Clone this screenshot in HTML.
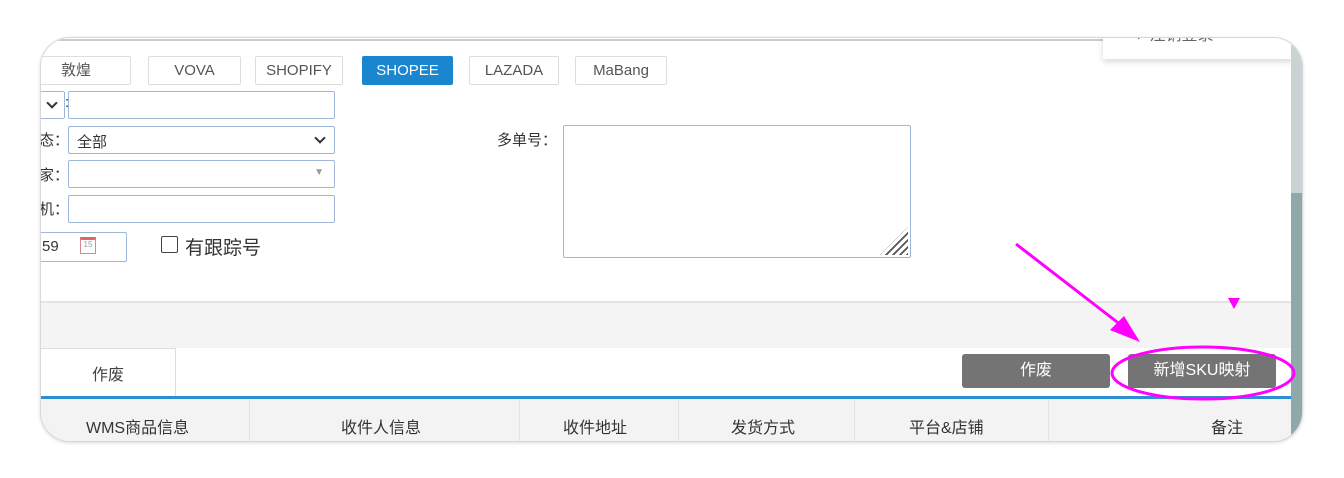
<!DOCTYPE html>
<html><head><meta charset="utf-8"><style>
*{margin:0;padding:0;box-sizing:border-box}
body{width:1344px;height:478px;background:#fff;position:relative;overflow:hidden;font-family:"Liberation Sans","Noto Sans CJK SC",sans-serif;color:#333}
.card{position:absolute;left:40px;top:37px;width:1263px;height:405px;border-radius:30px;border:1px solid #d8d8d8;overflow:hidden;background:#fff;box-shadow:0 1px 3px rgba(0,0,0,.15)}
.a{position:absolute}
.btn{position:absolute;top:18px;height:29px;border:1px solid #ddd;border-radius:2px;background:#fff;font-size:15px;color:#555;text-align:center;line-height:27px}
.inp{position:absolute;border:1px solid #9fb8d8;border-radius:2px;background:#fff;height:28px}
.lbl{position:absolute;font-size:15px;color:#333}
.th{position:absolute;top:376px;font-size:16px;color:#333}
.sep{position:absolute;top:362px;width:1px;height:42px;background:#e2e2e2}
.chev{position:absolute;width:8px;height:8px;border-right:2px solid #333;border-bottom:2px solid #333;transform:rotate(45deg)}
</style></head><body>
<div class="card">
 <div class="a" style="left:0;top:1px;width:1263px;height:2px;background:#ccc"></div>
 <div class="a" style="left:1062px;top:-10px;width:190px;height:31px;background:#fff;box-shadow:0 3px 6px rgba(0,0,0,.15);font-size:16px;color:#666;padding-left:26px;line-height:16px">⇨ 注销登录</div>
 <div class="btn" style="left:-20px;width:110px">敦煌</div>
 <div class="btn" style="left:107px;width:93px">VOVA</div>
 <div class="btn" style="left:214px;width:88px">SHOPIFY</div>
 <div class="btn" style="left:321px;width:91px;background:#1a86cf;border-color:#1a86cf;color:#fff">SHOPEE</div>
 <div class="btn" style="left:428px;width:90px">LAZADA</div>
 <div class="btn" style="left:534px;width:92px">MaBang</div>

 <div class="inp" style="left:-20px;top:53px;width:44px"><span class="chev" style="left:26px;top:7px"></span></div>
 <div class="lbl" style="left:24px;top:56px">:</div>
 <div class="inp" style="left:27px;top:53px;width:267px"></div>
 <div class="lbl" style="left:-2px;top:91px">态：</div>
 <div class="inp" style="left:27px;top:88px;width:267px"><span style="position:absolute;left:8px;top:4px;font-size:15px">全部</span><span class="chev" style="right:10px;top:7px"></span></div>
 <div class="lbl" style="left:-2px;top:126px">家：</div>
 <div class="inp" style="left:27px;top:122px;width:267px"><span style="position:absolute;right:10px;top:6px;font-size:10px;color:#999">▼</span></div>
 <div class="lbl" style="left:-2px;top:160px">机：</div>
 <div class="inp" style="left:27px;top:157px;width:267px"></div>
 <div class="inp" style="left:-20px;top:194px;width:106px;height:30px"><span style="position:absolute;left:20px;top:5px;font-size:15px">59</span><span style="position:absolute;left:58px;top:4px;width:16px;height:17px;border:1px solid #d88;border-top:3px solid #d66;font-size:8px;color:#999;text-align:center">15</span></div>
 <div class="a" style="left:120px;top:198px;width:17px;height:17px;border:1.5px solid #444;border-radius:2px"></div>
 <div class="lbl" style="left:144px;top:195px;font-size:19px">有跟踪号</div>
 <div class="lbl" style="left:456px;top:91px;font-size:15px">多单号：</div>
 <div class="inp" style="left:522px;top:87px;width:348px;height:133px"><span style="position:absolute;right:2px;bottom:2px;width:28px;height:28px;background:repeating-linear-gradient(135deg,transparent 0 3px,#555 3px 5px);clip-path:polygon(100% 0,100% 100%,0 100%)"></span></div>

 <div class="a" style="left:0;top:263px;width:1263px;height:47px;background:#f4f4f4;border-top:2px solid #e4e4e4"></div>
 <div class="a" style="left:0;top:310px;width:135px;height:50px;border-right:1px solid #ddd;border-top:1px solid #ddd;text-align:center;font-size:16px;line-height:54px;color:#444">作废</div>
 <div class="a" style="left:921px;top:316px;width:148px;height:34px;background:#747474;border-radius:3px;color:#fff;font-size:16px;text-align:center;line-height:34px">作废</div>
 <div class="a" style="left:1087px;top:316px;width:148px;height:34px;background:#747474;border-radius:3px;color:#fff;font-size:16px;text-align:center;line-height:34px">新增SKU映射</div>
 <div class="a" style="left:0;top:358px;width:1250px;height:3px;background:#2d8fd2"></div>
 <div class="a" style="left:0;top:361px;width:1250px;height:44px;background:#f3f3f3"></div>
 <div class="sep" style="left:208px"></div><div class="sep" style="left:478px"></div><div class="sep" style="left:637px"></div><div class="sep" style="left:813px"></div><div class="sep" style="left:1007px"></div>
 <div class="th" style="left:45px">WMS商品信息</div>
 <div class="th" style="left:300px">收件人信息</div>
 <div class="th" style="left:522px">收件地址</div>
 <div class="th" style="left:690px">发货方式</div>
 <div class="th" style="left:868px">平台&amp;店铺</div>
 <div class="th" style="left:1170px">备注</div>
 <div class="a" style="left:1250px;top:0;width:13px;height:405px;background:#c9d3d3"></div>
 <div class="a" style="left:1250px;top:155px;width:13px;height:250px;background:#8fa9aa"></div>
</div>
<svg class="a" style="left:0;top:0" width="1344" height="478">
 <line x1="1016" y1="244" x2="1130" y2="332" stroke="#f0f" stroke-width="3"/>
 <polygon points="1140,342 1110,330 1124,316" fill="#f0f"/>
 <polygon points="1228,298 1240,298 1234,309" fill="#f0f"/>
 <ellipse cx="1203" cy="373" rx="91" ry="26" fill="none" stroke="#f0f" stroke-width="3"/>
</svg>
</body></html>
